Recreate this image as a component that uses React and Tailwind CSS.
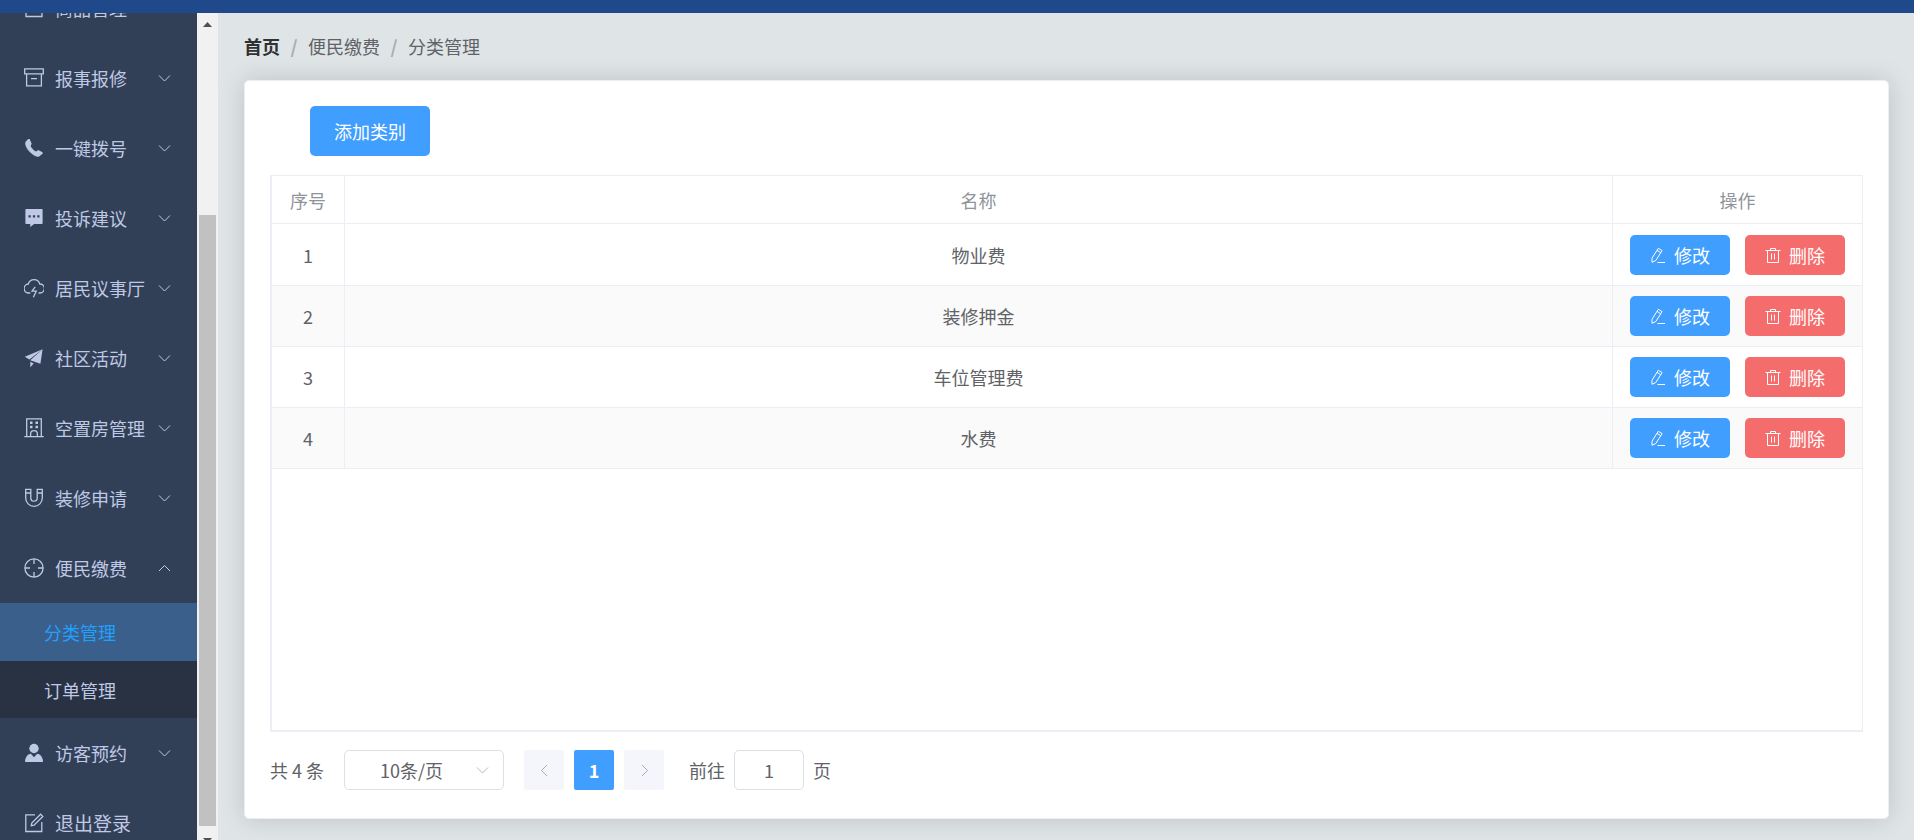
import React, { useState } from 'react';

function Icon({ children, className = 'size-5' }) {
  return (
    <svg viewBox="0 0 20 20" fill="none" stroke="currentColor" strokeWidth="1.3" className={`shrink-0 ${className}`} aria-hidden="true">
      {children}
    </svg>
  );
}

const GoodsIcon = () => (
  <Icon>
    <path d="M2 5.5h16v13H2zM6.5 8V4a3.5 3.5 0 0 1 7 0v4" />
  </Icon>
);
const BoxIcon = () => (
  <Icon>
    <path d="M.7.8h18.6v5H.7zM2.6 5.8v12h14.8v-12M7 10.6h6" />
  </Icon>
);
const PhoneIcon = () => (
  <Icon>
    <path
      fill="currentColor"
      stroke="none"
      d="M4.200 1 1.400 4.100C.5 7 3 11.300 6 14.200c3 2.900 6.300 4.900 8.800 4.500L18.800 15.600l-.3-1.400-4.300-2.200-2.100 1.500c-2-.8-4.500-3.200-5.500-5.500L7.700 5.700 5.600 1z"
    />
  </Icon>
);
const ChatIcon = () => (
  <Icon>
    <path
      fill="currentColor"
      stroke="none"
      fillRule="evenodd"
      d="M2.200 1h15.600q.8 0 .8.800v13.400q0 .8-.8.800h-7.600L6.200 19v-3h-4q-.8 0-.8-.8V1.800q0-.8.8-.8zM4.500 7.300v2.200h2.200V7.300zm4.400 0v2.200h2.200V7.300zm4.400 0v2.200h2.200V7.300z"
    />
  </Icon>
);
const CloudIcon = () => (
  <Icon>
    <path d="M6.300 15H5A4.500 4.500 0 0 1 4.300 6a6 6 0 0 1 11.500 0 4.500 4.500 0 0 1 .2 9h-1.500M11.200 8.800 8 13.200h4.200L9.400 19.300" />
  </Icon>
);
const SendIcon = () => (
  <Icon>
    <path fill="currentColor" stroke="none" d="M18.600 1.200.8 8.800l4.600 2.800zM18.600 1.200 6.200 12.300l10.200 3.500zM6.300 13.800v5.500l3.400-3.900z" />
  </Icon>
);
const OfficeIcon = () => (
  <Icon>
    <path d="M2.700 18.300V.8h14.600v17.500M.3 18.700h19.400M6.600 18.300V16a3.400 3.400 0 0 1 6.800 0v2.300" />
    <path fill="currentColor" stroke="none" d="M6 3.500h2.500V6H6zM11.500 3.500H14V6h-2.500zM6 7.800h2.500v2.500H6zM11.500 7.800H14v2.500h-2.500z" />
  </Icon>
);
const MagnetIcon = () => (
  <Icon>
    <path d="M1.700 1.300h5.100V10a3.200 3.200 0 0 0 6.400 0V1.300h5.100V10A8.300 8.300 0 0 1 1.700 10zM1.700 5h5.100M13.200 5h5.100" />
  </Icon>
);
const AimIcon = () => (
  <Icon>
    <circle cx="10" cy="10" r="9.100" />
    <path d="M10 1v5M10 14v5M1 10h5M14 10h5" />
  </Icon>
);
const UserIcon = () => (
  <Icon>
    <circle cx="10" cy="5.500" r="4.700" fill="currentColor" stroke="none" />
    <path fill="currentColor" stroke="none" d="M1 19q.3-7.500 5.800-8.300L10 14.200l3.200-3.500Q18.700 11.500 19 19z" />
  </Icon>
);
const EditBoxIcon = () => (
  <Icon>
    <path d="M11 1.800H1.800v16.700h16V9M7.300 12.700l.5-2.700L16.600 1.200l2.200 2.200L10 12.200z" />
  </Icon>
);

function Chevron({ dir = 'down', className = '' }) {
  const paths = {
    down: 'M1 3.500 6.500 9 12 3.500',
    up: 'M1 9 6.500 3.500 12 9',
    left: 'M9 1 3.500 6.500 9 12',
    right: 'M4 1 9.500 6.500 4 12',
  };
  return (
    <svg viewBox="0 0 13 13" fill="none" stroke="currentColor" className={`size-[13px] shrink-0 ${className}`} aria-hidden="true">
      <path d={paths[dir]} />
    </svg>
  );
}

const menu = [
  { label: '商品管理', icon: GoodsIcon },
  { label: '报事报修', icon: BoxIcon },
  { label: '一键拨号', icon: PhoneIcon },
  { label: '投诉建议', icon: ChatIcon },
  { label: '居民议事厅', icon: CloudIcon },
  { label: '社区活动', icon: SendIcon },
  { label: '空置房管理', icon: OfficeIcon },
  { label: '装修申请', icon: MagnetIcon },
  { label: '便民缴费', icon: AimIcon, open: true },
  { label: '访客预约', icon: UserIcon },
  { label: '退出登录', icon: EditBoxIcon, leaf: true },
];

function Sidebar() {
  return (
    <aside className="flex shrink-0 overflow-hidden">
      <nav className="w-[197px] overflow-hidden bg-[#324057] text-[#bfc8e4]">
        <ul className="-mt-10">
          {menu.map(({ label, icon: ItemIcon, open, leaf }) => (
            <li key={label}>
              <button type="button" className="flex h-[70px] w-full items-center pr-[26px] pl-6 text-left">
                <ItemIcon />
                <span className={`ml-[11px] flex-1 whitespace-nowrap ${leaf ? 'text-[19px]' : ''}`}>{label}</span>
                {!leaf && <Chevron dir={open ? 'up' : 'down'} />}
              </button>
              {open && (
                <ul>
                  <li>
                    <a href="#category" aria-current="page" className="flex h-[58px] items-center bg-[#3b5f8b] pl-11 text-[#20a0ff]">
                      分类管理
                    </a>
                  </li>
                  <li>
                    <a href="#orders" className="flex h-[57px] items-center bg-[#283243] pl-11">
                      订单管理
                    </a>
                  </li>
                </ul>
              )}
            </li>
          ))}
        </ul>
      </nav>
      <div className="flex w-[21px] flex-col bg-[#f1f1f1]" aria-hidden="true">
        <svg viewBox="0 0 21 21" className="size-[21px] shrink-0">
          <path d="M6 14h9l-4.500-5z" fill="#505050" />
        </svg>
        <div className="mx-[2px] mt-[181px] flex-1 bg-[#c1c1c1]" />
        <div className="h-[14px] overflow-hidden">
          <svg viewBox="0 0 21 21" className="size-[21px]">
            <path d="M6 12h9l-4.500 5z" fill="#505050" />
          </svg>
        </div>
      </div>
    </aside>
  );
}

function Breadcrumb() {
  return (
    <nav aria-label="breadcrumb" className="flex items-center leading-6">
      <a href="#home" className="font-bold text-[#303133]">首页</a>
      <span className="w-7 text-center font-bold text-[#a8abb3]">/</span>
      <span>便民缴费</span>
      <span className="w-7 text-center font-bold text-[#a8abb3]">/</span>
      <span>分类管理</span>
    </nav>
  );
}

function ActionButton({ kind }) {
  const edit = kind === 'edit';
  return (
    <button
      type="button"
      className={`flex h-10 w-[100px] items-center justify-center gap-2 rounded-[5px] text-white ${edit ? 'bg-[#409eff]' : 'bg-[#f56c6c]'}`}
    >
      <svg viewBox="0 0 16 16" fill="none" stroke="currentColor" className="size-4 shrink-0" aria-hidden="true">
        {edit ? (
          <path d="M2 11.200 8.300 1.300l3.800 2.300L5.800 13.500 2 15.300zM7 3.400l3.800 2.300M7.500 15.500H15" />
        ) : (
          <path d="M.5 3.500h15M5.500 3.500v-2h5v2M2.500 3.500v12h11v-12M6.500 6.500v6M9.500 6.500v6" />
        )}
      </svg>
      {edit ? '修改' : '删除'}
    </button>
  );
}

const rows = ['物业费', '装修押金', '车位管理费', '水费'];

function CategoryTable() {
  return (
    <div className="mt-[19px] flex-1 border-t border-r border-b-2 border-l-2 border-[#ebeef5]">
      <table className="w-full table-fixed border-separate border-spacing-0 text-center">
        <colgroup>
          <col className="w-[73px]" />
          <col />
          <col className="w-[249px]" />
        </colgroup>
        <thead className="text-[#909399]">
          <tr>
            <th className="h-12 border-r border-b border-[#ebeef5] p-0 font-normal">序号</th>
            <th className="border-r border-b border-[#ebeef5] p-0 font-normal">名称</th>
            <th className="border-b border-[#ebeef5] p-0 font-normal">操作</th>
          </tr>
        </thead>
        <tbody>
          {rows.map((name, i) => (
            <tr key={name} className="h-[61px] first:h-[62px] even:bg-[#fafafa]">
              <td className="border-r border-b border-[#ebeef5] p-0">{i + 1}</td>
              <td className="border-r border-b border-[#ebeef5] p-0">{name}</td>
              <td className="border-b border-[#ebeef5] px-0 py-[10px]">
                <div className="flex justify-center gap-[15px]">
                  <ActionButton kind="edit" />
                  <ActionButton kind="delete" />
                </div>
              </td>
            </tr>
          ))}
        </tbody>
      </table>
    </div>
  );
}

function Pagination() {
  const [page, setPage] = useState('1');
  return (
    <div className="mt-[18px] flex h-10 items-center">
      <span className="w-[74px] whitespace-nowrap">共 4 条</span>
      <div className="relative">
        <select aria-label="每页条数" className="h-10 w-40 appearance-none rounded-[5px] border border-[#dcdfe6] bg-white pr-[25px] text-center">
          <option>10条/页</option>
        </select>
        <Chevron className="pointer-events-none absolute top-[14px] right-[15px] text-[#b4b8c0]" />
      </div>
      <div className="ml-5 flex gap-[10px]">
        <button type="button" aria-label="上一页" disabled className="flex size-10 items-center justify-center rounded-[2px] bg-[#f5f6fb] text-[#a8abb3]">
          <Chevron dir="left" />
        </button>
        <button type="button" className="size-10 rounded-[2px] bg-[#409eff] font-bold text-white">1</button>
        <button type="button" aria-label="下一页" disabled className="flex size-10 items-center justify-center rounded-[2px] bg-[#f5f6fb] text-[#a8abb3]">
          <Chevron dir="right" />
        </button>
      </div>
      <label className="ml-[25px] flex items-center gap-[9px]">
        前往
        <input
          value={page}
          onChange={(e) => setPage(e.target.value)}
          className="h-10 w-[70px] rounded-[5px] border border-[#dcdfe6] bg-white text-center"
        />
        <span>页</span>
      </label>
    </div>
  );
}

export default function App() {
  return (
    <div className="flex h-screen flex-col overflow-hidden bg-[#dfe4e6] font-['Noto_Sans_CJK_SC',sans-serif] text-[18px] leading-6 font-normal text-[#606266]">
      <header className="h-[13px] shrink-0 bg-[#20498c]" />
      <div className="flex min-h-0 flex-1">
        <Sidebar />
        <main className="flex min-w-0 flex-1 flex-col px-[25px] pt-[21px] pb-[21px] pl-[26px]">
          <Breadcrumb />
          <section className="mt-[22px] flex flex-1 flex-col rounded-[5px] border border-[#ebeef5] bg-white px-[25px] pt-[25px] pb-[28px] shadow-[0_0_25px_rgba(0,0,0,0.15)]">
            <button type="button" className="ml-10 h-[50px] w-[120px] self-start rounded-[5px] bg-[#409eff] text-white">
              添加类别
            </button>
            <CategoryTable />
            <Pagination />
          </section>
        </main>
      </div>
    </div>
  );
}
